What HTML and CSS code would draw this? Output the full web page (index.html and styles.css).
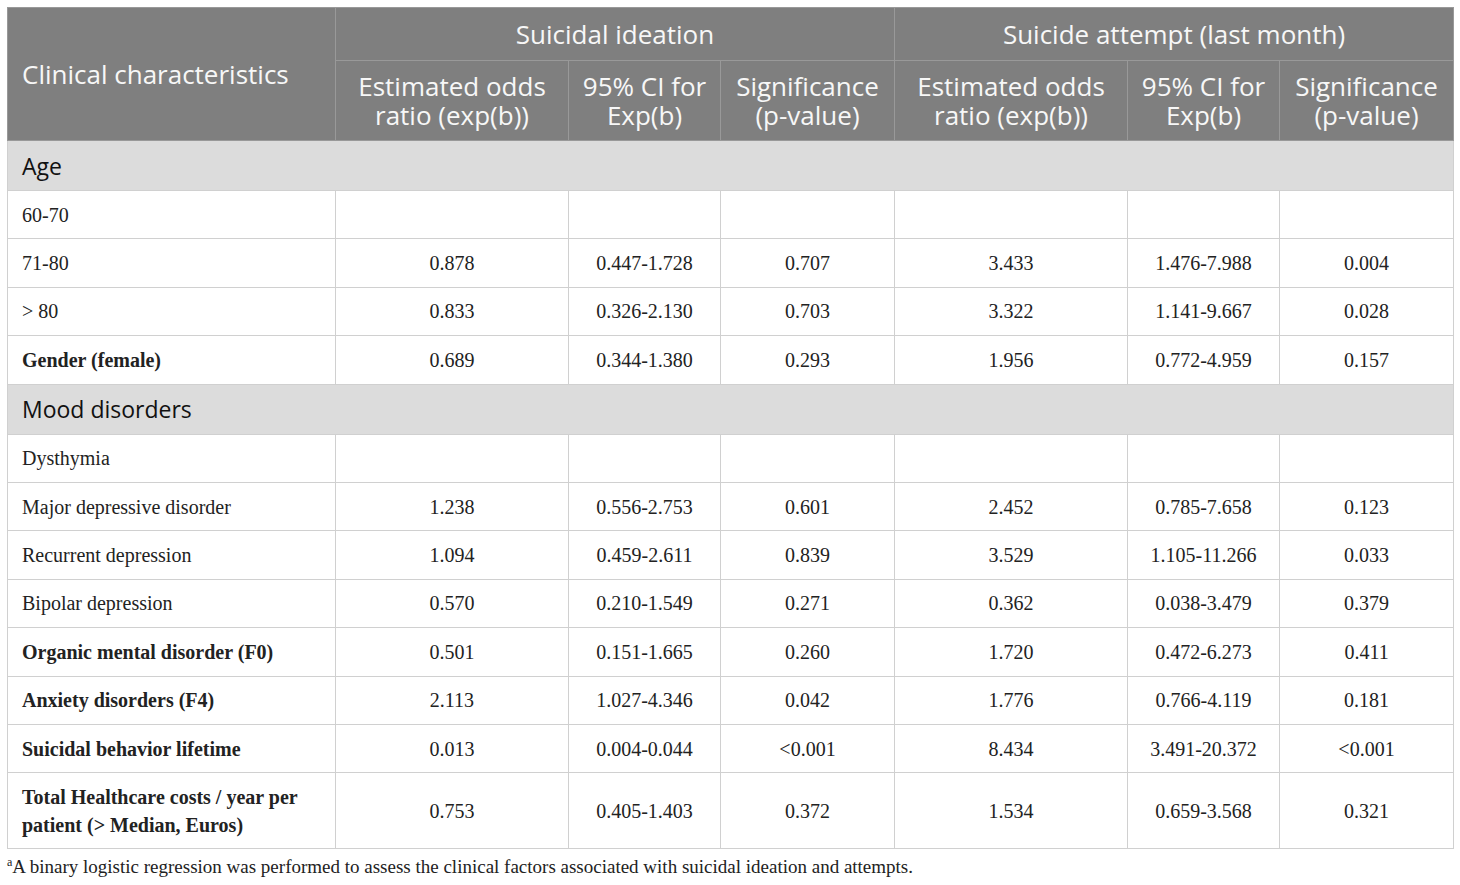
FILE: index.html
```html
<!DOCTYPE html>
<html lang="en">
<head>
    <meta charset="UTF-8">
    <title>Clinical factors associated with suicidal ideation and attempts</title>
    <link rel="stylesheet" href="styles.css">
</head>
<body>
    <div class="table-wrap">
        <table class="data-table">
            <colgroup>
                <col class="col-label">
                <col class="col-or">
                <col class="col-ci">
                <col class="col-sig">
                <col class="col-or">
                <col class="col-ci">
                <col class="col-sig">
            </colgroup>
            <thead>
                <tr class="head-top">
                    <th rowspan="2" class="label-head">Clinical characteristics</th>
                    <th colspan="3">Suicidal ideation</th>
                    <th colspan="3">Suicide attempt (last month)</th>
                </tr>
                <tr class="head-sub">
                    <th>Estimated odds ratio (exp(b))</th>
                    <th>95% CI for Exp(b)</th>
                    <th>Significance (p-value)</th>
                    <th>Estimated odds ratio (exp(b))</th>
                    <th>95% CI for Exp(b)</th>
                    <th>Significance (p-value)</th>
                </tr>
            </thead>
            <tbody>
                <tr class="section"><td colspan="7">Age</td></tr>
                <tr><td>60-70</td><td></td><td></td><td></td><td></td><td></td><td></td></tr>
                <tr><td>71-80</td><td>0.878</td><td>0.447-1.728</td><td>0.707</td><td>3.433</td><td>1.476-7.988</td><td>0.004</td></tr>
                <tr><td>&gt; 80</td><td>0.833</td><td>0.326-2.130</td><td>0.703</td><td>3.322</td><td>1.141-9.667</td><td>0.028</td></tr>
                <tr><td class="bold">Gender (female)</td><td>0.689</td><td>0.344-1.380</td><td>0.293</td><td>1.956</td><td>0.772-4.959</td><td>0.157</td></tr>
                <tr class="section"><td colspan="7">Mood disorders</td></tr>
                <tr><td>Dysthymia</td><td></td><td></td><td></td><td></td><td></td><td></td></tr>
                <tr><td>Major depressive disorder</td><td>1.238</td><td>0.556-2.753</td><td>0.601</td><td>2.452</td><td>0.785-7.658</td><td>0.123</td></tr>
                <tr><td>Recurrent depression</td><td>1.094</td><td>0.459-2.611</td><td>0.839</td><td>3.529</td><td>1.105-11.266</td><td>0.033</td></tr>
                <tr><td>Bipolar depression</td><td>0.570</td><td>0.210-1.549</td><td>0.271</td><td>0.362</td><td>0.038-3.479</td><td>0.379</td></tr>
                <tr><td class="bold">Organic mental disorder (F0)</td><td>0.501</td><td>0.151-1.665</td><td>0.260</td><td>1.720</td><td>0.472-6.273</td><td>0.411</td></tr>
                <tr><td class="bold">Anxiety disorders (F4)</td><td>2.113</td><td>1.027-4.346</td><td>0.042</td><td>1.776</td><td>0.766-4.119</td><td>0.181</td></tr>
                <tr><td class="bold">Suicidal behavior lifetime</td><td>0.013</td><td>0.004-0.044</td><td>&lt;0.001</td><td>8.434</td><td>3.491-20.372</td><td>&lt;0.001</td></tr>
                <tr class="tall"><td class="bold">Total Healthcare costs / year per patient (&gt; Median, Euros)</td><td>0.753</td><td>0.405-1.403</td><td>0.372</td><td>1.534</td><td>0.659-3.568</td><td>0.321</td></tr>
            </tbody>
        </table>
        <p class="footnote"><sup>a</sup>A binary logistic regression was performed to assess the clinical factors associated with suicidal ideation and attempts.</p>
    </div>
</body>
</html>
```

FILE: styles.css
```css
/* Page */
body {
    margin: 0;
    padding: 7px;
    background: #ffffff;
    font-family: "Liberation Serif", "Times New Roman", serif;
    color: #222;
}
.table-wrap {
    width: 1446px;
}

/* Table */
.data-table {
    width: 1446px;
    border-collapse: collapse;
    table-layout: fixed;
}
.col-label { width: 328px; }
.col-or { width: 233px; }
.col-ci { width: 152px; }
.col-sig { width: 174px; }

.data-table th {
    background-color: #7f7f7f;
    color: #f7f7f7;
    font-family: "Open Sans", "Noto Sans", sans-serif;
    font-weight: normal;
    font-size: 26px;
    line-height: 29px;
    border: 1px solid #999;
    padding: 0 8px;
    text-align: center;
}
.data-table th.label-head {
    text-align: left;
    padding-left: 14px;
}
.head-top th {
    height: 52px;
}
.head-sub th {
    height: 79px;
}

.data-table td {
    border: 1px solid #d0d0d0;
    font-size: 20px;
    line-height: 28px;
    height: 47.4px;
    padding: 0 14px;
    text-align: center;
    color: #222;
}
.data-table td:first-child {
    text-align: left;
}
.data-table td.bold {
    font-weight: bold;
}
.section td {
    background-color: #dcdcdc;
    font-family: "Open Sans", "Noto Sans", sans-serif;
    font-size: 23px;
    height: 49px;
    color: #111;
}
.tall td {
    height: 75px;
}

/* Footnote */
.footnote {
    margin: 6px 0 0;
    font-size: 19px;
    color: #222;
}
.footnote sup {
    font-size: 12px;
}
```
